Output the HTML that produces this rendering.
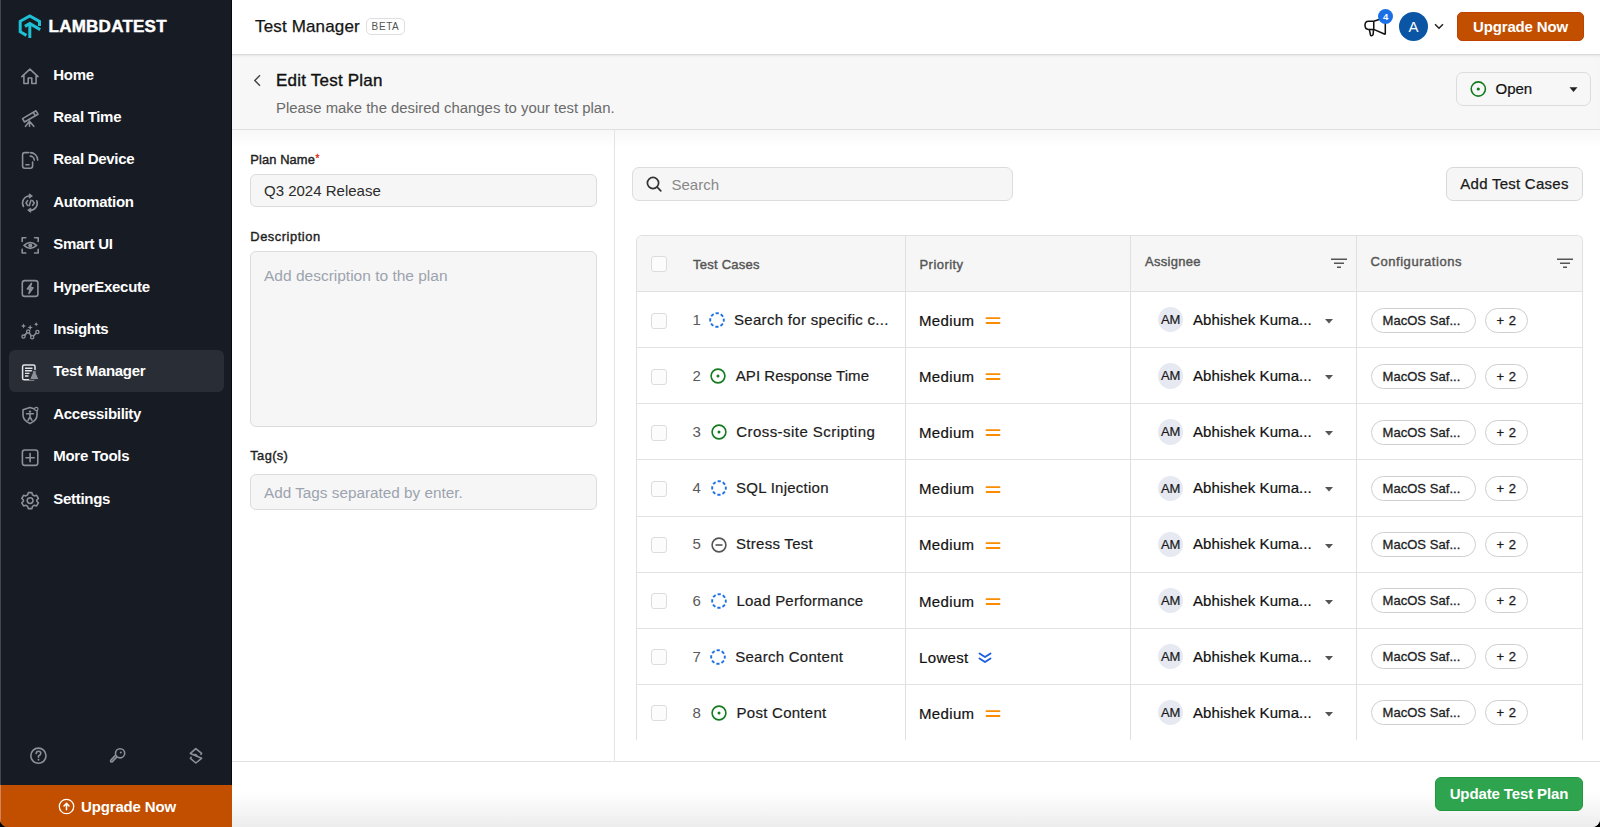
<!DOCTYPE html><html><head><meta charset="utf-8"><style>*{box-sizing:border-box;margin:0;padding:0}
html,body{width:1600px;height:827px;overflow:hidden;background:#000}
body{font-family:"Liberation Sans",sans-serif;position:relative;color:#1a1a1a}
.abs{position:absolute}
#win{position:absolute;left:0;top:0;width:1600px;height:827px;border-radius:0 0 8px 8px;overflow:hidden;background:#fff}
#side{position:absolute;left:0;top:0;width:232px;height:827px;background:#171b24;border-left:1px solid #44474d;border-right:1px solid #07090d}
.logo-t{position:absolute;left:47.5px;top:18px;font-size:17px;font-weight:700;color:#fff;letter-spacing:0.25px;line-height:17px;-webkit-text-stroke:0.45px #fff}
.nav{position:absolute;left:8px;width:215px;height:42px;border-radius:6px}
.nav.act{background:#292d36}
.nav svg{position:absolute;left:11.3px;top:12px;width:20px;height:20px}
.nav span{position:absolute;left:44.3px;top:0;line-height:42px;font-size:15px;font-weight:700;color:#fff;letter-spacing:-0.3px;white-space:nowrap}
#upg{position:absolute;left:-1px;top:785px;width:232px;height:42px;background:#c24e00;border-left:1px solid #d5835c}
#hdr{position:absolute;left:232px;top:0;width:1368px;height:55px;background:#fff;border-bottom:1px solid #d9d9d9}
#ph{box-shadow:inset 0 3px 3px -2px #e4e4e4}
#ph{position:absolute;left:232px;top:55px;width:1368px;height:75px;background:#f7f7f7;border-bottom:1px solid #e0e0e0}
#lp{position:absolute;left:232px;top:130px;width:383px;height:632px;background:linear-gradient(#f8f8f8,#fff 18px);border-right:1px solid #e3e3e3}
#rp{position:absolute;left:615px;top:130px;width:985px;height:632px;background:linear-gradient(#f8f8f8,#fff 18px)}
#ft{position:absolute;left:232px;top:761px;width:1368px;height:66px;border-top:1px solid #e2e2e2;background:linear-gradient(#fff 0,#fff 30px,#ececec 66px)}
.lbl{position:absolute;left:250.3px;font-size:12.9px;font-weight:400;color:#1f1f1f;line-height:14px;white-space:nowrap;-webkit-text-stroke:0.4px #1f1f1f;letter-spacing:0.1px}
.inp{position:absolute;left:250px;width:347px;background:#f6f6f6;border:1px solid #dcdcdc;border-radius:6px}
.ph{color:#9ca3ae}
.txt{position:absolute;white-space:nowrap;line-height:1}
.hd{font-size:13px;font-weight:400;color:#555;-webkit-text-stroke:0.4px #555}
#tbl{position:absolute;left:636px;top:235px;width:947px;height:505px;border:1px solid #e0e0e0;border-bottom:none;border-radius:6px 6px 0 0;overflow:hidden}
.th{position:absolute;left:0;top:0;width:947px;height:56px;background:#f6f6f6;border-bottom:1px solid #e0e0e0}
.vl{position:absolute;top:0;width:1px;height:505px;background:#e0e0e0}
.row{position:absolute;left:0;width:947px;height:56.14px;border-bottom:1px solid #e3e3e3}
.cb{position:absolute;width:16px;height:16px;border:1px solid #dcdcdc;border-radius:3px;background:#fcfcfc}
.pill{position:absolute;height:25px;border:1px solid #cfcfcf;border-radius:13px;background:#fff;font-size:13px;font-weight:400;color:#1e1e1e;line-height:24px;text-align:center;white-space:nowrap;-webkit-text-stroke:0.3px #1e1e1e;letter-spacing:0.05px}

.tk{-webkit-text-stroke:0.2px currentColor}
</style></head><body><div id="win">
<div id="side">
<svg class="abs" style="left:16px;top:13px" width="27" height="27" viewBox="0 0 27 27">
<path d="M9.4 22.4 L3.2 18.7 V8.3 L12.8 2.9 L22.5 8.4 V12.9" fill="none" stroke="#1ec1d4" stroke-width="3"/>
<path d="M7.9 13.4 L12.8 10.6 L23.2 16.6" fill="none" stroke="#1ec1d4" stroke-width="3"/>
<path d="M12.8 11 V25" fill="none" stroke="#1ec1d4" stroke-width="3"/>
</svg><div class="logo-t">LAMBDATEST</div>
<div class="nav" style="top:53.60px"><svg viewBox="0 0 20 20"><path d="M1.8 10.6 L9.9 3.2 L18 10.6 M3.9 9 V17.5 H8.2 V12 H11.8 V17.5 H16.1 V9" fill="none" stroke="#8b9099" stroke-width="1.6" stroke-linecap="round" stroke-linejoin="round"/></svg><span>Home</span></div>
<div class="nav" style="top:96.00px"><svg viewBox="0 0 20 20"><path d="M2.5 10.6 L16 2.8 L18 6.2 L4.5 14 Z M13.3 4.3 L15.3 7.8" fill="none" stroke="#8b9099" stroke-width="1.6" stroke-linecap="round" stroke-linejoin="round"/><path d="M9.5 13.3 L5.5 18.3 M9.5 13.3 V18.3 M9.5 13.3 L13.8 18.3" fill="none" stroke="#8b9099" stroke-width="1.6" stroke-linecap="round" stroke-linejoin="round"/></svg><span>Real Time</span></div>
<div class="nav" style="top:138.40px"><svg viewBox="0 0 20 20"><path d="M8.5 2.6 H4.8 Q2.6 2.6 2.6 4.8 V16 Q2.6 18.2 4.8 18.2 H10.4 Q12.6 18.2 12.6 16 V12" fill="none" stroke="#8b9099" stroke-width="1.6" stroke-linecap="round" stroke-linejoin="round"/><path d="M6 14.8 H9" fill="none" stroke="#8b9099" stroke-width="1.6" stroke-linecap="round" stroke-linejoin="round"/><path d="M10.2 2.6 A7.5 7.5 0 0 1 17.7 10.1 M10.2 6.1 A4 4 0 0 1 14.2 10.1" fill="none" stroke="#8b9099" stroke-width="1.6" stroke-linecap="round" stroke-linejoin="round"/></svg><span>Real Device</span></div>
<div class="nav" style="top:180.80px"><svg viewBox="0 0 20 20"><path d="M3.5 13.5 A7 7 0 0 1 9.8 3 M16.8 7.8 A7 7 0 0 1 10.3 17.2" fill="none" stroke="#8b9099" stroke-width="1.6" stroke-linecap="round" stroke-linejoin="round"/><path d="M9.3 0.9 L12.4 3 L9.3 5.1 Z M10.8 15.1 L7.7 17.2 L10.8 19.3 Z" fill="#8b9099" stroke="#8b9099" stroke-width="1" stroke-linejoin="round"/><path d="M7.6 7.6 L6 10 L7.6 12.4 M12.6 7.6 L14.2 10 L12.6 12.4 M11 7.2 L9.2 12.8" fill="none" stroke="#8b9099" stroke-width="1.6" stroke-linecap="round" stroke-linejoin="round" stroke-width="1.4"/></svg><span>Automation</span></div>
<div class="nav" style="top:223.20px"><svg viewBox="0 0 20 20"><path d="M2.2 6.4 V2.8 H5.8 M14.6 2.8 H18.2 V6.4 M18.2 14.4 V18 H14.6 M5.8 18 H2.2 V14.4" fill="none" stroke="#8b9099" stroke-width="1.6" stroke-linecap="round" stroke-linejoin="round"/><path d="M4 10.4 Q10.2 4.6 16.6 10.4 Q10.2 16.2 4 10.4 Z" fill="none" stroke="#8b9099" stroke-width="1.6" stroke-linecap="round" stroke-linejoin="round"/><circle cx="10.3" cy="10.4" r="2" fill="#8b9099"/></svg><span>Smart UI</span></div>
<div class="nav" style="top:265.60px"><svg viewBox="0 0 20 20"><rect x="2.3" y="2.6" width="15.6" height="15.8" rx="2.5" fill="none" stroke="#8b9099" stroke-width="1.6" stroke-linecap="round" stroke-linejoin="round"/><path d="M11.4 5.4 L7.4 11 H10.3 L9 15.4 L13 9.8 H10.1 Z" fill="none" stroke="#8b9099" stroke-width="1.6" stroke-linecap="round" stroke-linejoin="round" stroke-width="1.3"/></svg><span>HyperExecute</span></div>
<div class="nav" style="top:308.00px"><svg viewBox="0 0 20 20"><path d="M3.5 16.6 L8.2 11.4 L12.2 17.2 L17.4 12" fill="none" stroke="#8b9099" stroke-width="1.6" stroke-linecap="round" stroke-linejoin="round" stroke-width="1.4"/><circle cx="3.5" cy="16.6" r="1.6" fill="#181c25" stroke="#8b9099" stroke-width="1.3"/><circle cx="8.2" cy="11.4" r="1.6" fill="#181c25" stroke="#8b9099" stroke-width="1.3"/><circle cx="12.2" cy="17.2" r="1.6" fill="#181c25" stroke="#8b9099" stroke-width="1.3"/><circle cx="17.4" cy="12" r="1.6" fill="#181c25" stroke="#8b9099" stroke-width="1.3"/><path d="M3.5 3.5 L4.3 5.2 L6 6 L4.3 6.8 L3.5 8.5 L2.7 6.8 L1 6 L2.7 5.2 Z M10.2 4.8 L11 6.7 L12.9 7.5 L11 8.3 L10.2 10.2 L9.4 8.3 L7.5 7.5 L9.4 6.7 Z M16.2 2 L16.9 3.5 L18.4 4.2 L16.9 4.9 L16.2 6.4 L15.5 4.9 L14 4.2 L15.5 3.5 Z" fill="#8b9099"/></svg><span>Insights</span></div>
<div class="nav act" style="top:350.40px"><svg viewBox="0 0 20 20"><rect x="2.6" y="3" width="12.4" height="14.8" rx="1.6" fill="none" stroke="#e3e4e7" stroke-width="1.5"/><path d="M5 6.2 H12.5 M5 8.8 H12.5 M5 11.4 H9.5 M5 14 H8.5" stroke="#e3e4e7" stroke-width="1.4"/><path d="M12.2 8.6 H16.2 V11 L19 17.6 H9.6 L12.4 11 Z" fill="#8b9099" stroke="#292d36" stroke-width="1"/></svg><span>Test Manager</span></div>
<div class="nav" style="top:392.80px"><svg viewBox="0 0 20 20"><path d="M10 2.4 L17 4.8 V10 Q17 15.6 10 18.4 Q3 15.6 3 10 V4.8 Z" fill="none" stroke="#8b9099" stroke-width="1.6" stroke-linecap="round" stroke-linejoin="round"/><circle cx="16.3" cy="4" r="1.7" fill="#181c25" stroke="#8b9099" stroke-width="1.2"/><circle cx="10" cy="6.6" r="1.2" fill="#8b9099"/><path d="M6.6 8.8 H13.4 M10 8.8 V12 L8 15.4 M10 12 L12 15.4" fill="none" stroke="#8b9099" stroke-width="1.6" stroke-linecap="round" stroke-linejoin="round" stroke-width="1.4"/></svg><span>Accessibility</span></div>
<div class="nav" style="top:435.20px"><svg viewBox="0 0 20 20"><rect x="2.4" y="3" width="15.4" height="15.4" rx="2.3" fill="none" stroke="#8b9099" stroke-width="1.6" stroke-linecap="round" stroke-linejoin="round"/><path d="M10.1 6.6 V14.8 M6 10.7 H14.2" fill="none" stroke="#8b9099" stroke-width="1.6" stroke-linecap="round" stroke-linejoin="round"/></svg><span>More Tools</span></div>
<div class="nav" style="top:477.60px"><svg viewBox="0 0 20 20"><path d="M8.3 2.6 H11.9 L12.5 4.8 L14.4 5.9 L16.6 5.3 L18.4 8.4 L16.8 10 V11.2 L18.4 12.8 L16.6 15.9 L14.4 15.3 L12.5 16.4 L11.9 18.6 H8.3 L7.7 16.4 L5.8 15.3 L3.6 15.9 L1.8 12.8 L3.4 11.2 V10 L1.8 8.4 L3.6 5.3 L5.8 5.9 L7.7 4.8 Z" fill="none" stroke="#8b9099" stroke-width="1.6" stroke-linecap="round" stroke-linejoin="round" stroke-width="1.5"/><circle cx="10.1" cy="10.6" r="2.9" fill="none" stroke="#8b9099" stroke-width="1.6" stroke-linecap="round" stroke-linejoin="round"/></svg><span>Settings</span></div>
<svg class="abs" style="left:28.3px;top:746px" width="20" height="20" viewBox="0 0 20 20"><circle cx="9.4" cy="9.7" r="7.6" fill="none" stroke="#8b9099" stroke-width="1.6" stroke-linecap="round" stroke-linejoin="round" stroke-width="1.5"/><path d="M7.2 7.6 Q7.2 5.2 9.5 5.2 Q11.8 5.2 11.8 7.3 Q11.8 8.9 9.5 9.9 V11.2" fill="none" stroke="#8b9099" stroke-width="1.6" stroke-linecap="round" stroke-linejoin="round" stroke-width="1.5"/><circle cx="9.5" cy="13.8" r="0.95" fill="#8b9099"/></svg>
<svg class="abs" style="left:107px;top:746px" width="20" height="20" viewBox="0 0 20 20"><circle cx="12.1" cy="7.3" r="4.6" fill="none" stroke="#8b9099" stroke-width="1.6" stroke-linecap="round" stroke-linejoin="round" stroke-width="1.5"/><circle cx="12.8" cy="6.5" r="1" fill="#8b9099"/><path d="M8.9 10.9 L4.4 15.6 Q3.5 16.4 2.8 15.7 Q2.1 15 2.9 14.1 L7.4 9.4" fill="none" stroke="#8b9099" stroke-width="1.6" stroke-linecap="round" stroke-linejoin="round" stroke-width="1.5"/></svg>
<svg class="abs" style="left:185px;top:746px" width="20" height="20" viewBox="0 0 20 20"><path d="M15 8.4 L15.6 7.4 L9.8 2.6 L4.4 7.4 L15.6 12.3 L9.8 17 L4.4 12.3 L5 11.3" fill="none" stroke="#8b9099" stroke-width="1.6" stroke-linecap="round" stroke-linejoin="round" stroke-width="1.5"/><path d="M8.7 8.6 Q10.3 8.3 10.8 9.8" fill="none" stroke="#8b9099" stroke-width="1.6" stroke-linecap="round" stroke-linejoin="round" stroke-width="1.3"/></svg>
<div id="upg"><svg class="abs" style="left:56.5px;top:13px" width="17" height="17" viewBox="0 0 17 17"><circle cx="8.5" cy="8.5" r="7.2" fill="none" stroke="#fff" stroke-width="1.3"/><path d="M8.5 11.8 V5.4 M6 7.9 L8.5 5.3 L11 7.9" fill="none" stroke="#fff" stroke-width="1.5" stroke-linecap="round" stroke-linejoin="round"/></svg><span class="txt" style="left:80px;top:14px;font-size:15px;font-weight:700;color:#fff;letter-spacing:-0.15px">Upgrade Now</span></div>
</div>
<div id="hdr"></div>
<span class="txt" style="left:255px;top:18.3px;font-size:17px;color:#151515;letter-spacing:0.15px;-webkit-text-stroke:0.25px #151515">Test Manager</span>
<div class="abs" style="left:365.5px;top:17.5px;width:39.5px;height:17.8px;border:1px solid #dedede;border-radius:5px;font-size:10px;color:#555;letter-spacing:0.6px;line-height:16px;text-align:center;padding-left:0.5px">BETA</div>
<svg class="abs" style="left:1362px;top:16px" width="26" height="24" viewBox="0 0 26 24"><path d="M11.75 5.25 H6.5 Q3 5.25 3 9.3 Q3 13.4 6.5 13.4 H11.75 Z M11.75 5.25 L23.3 1.5 V17.3 Q23.3 18.4 22.3 18 L11.75 13.4 M7.3 13.4 L8.5 19 Q8.9 20 10 19.6 Q11 19.2 11.2 18 L11.5 13.4" fill="none" stroke="#111" stroke-width="1.55" stroke-linejoin="round" stroke-linecap="round"/></svg>
<div class="abs" style="left:1377.8px;top:8.5px;width:15.6px;height:15.6px;border-radius:50%;background:#1b6fe4;color:#fff;font-size:9.5px;font-weight:700;text-align:center;line-height:16px">4</div>
<div class="abs" style="left:1399px;top:12px;width:29px;height:29px;border-radius:50%;background:#0b56a4;color:#fff;font-size:15px;text-align:center;line-height:30.5px">A</div>
<svg class="abs" style="left:1433px;top:21px" width="12" height="10" viewBox="0 0 12 10"><path d="M2 3.2 L6 7.2 L10 3.2" fill="none" stroke="#222" stroke-width="1.5"/></svg>
<div class="abs" style="left:1457px;top:12px;width:127px;height:29px;border-radius:5px;background:#c24e00;border:1px solid #bf4200;color:#fff;font-size:15px;font-weight:700;text-align:center;line-height:27px;letter-spacing:-0.15px">Upgrade Now</div>
<div id="ph"></div>
<svg class="abs" style="left:251px;top:73px" width="12" height="15" viewBox="0 0 12 15"><path d="M9 2.2 L3.8 7.5 L9 12.8" fill="none" stroke="#444" stroke-width="1.4"/></svg>
<span class="txt" style="left:276px;top:72.3px;font-size:17px;color:#111;letter-spacing:0.22px;-webkit-text-stroke:0.35px #111">Edit Test Plan</span>
<span class="txt" style="left:276px;top:101.3px;font-size:14.9px;color:#6b6b6b">Please make the desired changes to your test plan.</span>
<div class="abs" style="left:1456px;top:72px;width:135px;height:33.5px;border:1px solid #dcdcdc;border-radius:7px;background:#f7f7f7"></div>
<svg class="abs" style="left:1469px;top:80px" width="18" height="18" viewBox="0 0 18 18"><circle cx="9.3" cy="9" r="7.1" fill="none" stroke="#137a1e" stroke-width="1.6"/><circle cx="9.3" cy="9" r="1.6" fill="#137a1e"/></svg>
<span class="txt" style="left:1495.5px;top:81px;font-size:15px;color:#111;-webkit-text-stroke:0.2px #111">Open</span>
<svg class="abs" style="left:1568px;top:86px" width="11" height="7" viewBox="0 0 11 7"><path d="M1.5 1.3 H9.5 L5.5 6 Z" fill="#222"/></svg>
<div id="lp"></div>
<span class="lbl" style="top:152.5px">Plan Name<span style="color:#d5300f;font-size:10px;position:relative;top:-1.5px;-webkit-text-stroke:0.3px #d5300f;margin-left:0.5px">*</span></span>
<div class="inp" style="top:174px;height:33px"></div>
<span class="txt" style="left:264px;top:183.3px;font-size:15px;color:#2b2b2b">Q3 2024 Release</span>
<span class="lbl" style="top:229.5px;letter-spacing:0.53px">Description</span>
<div class="inp" style="top:251px;height:176px"></div>
<span class="txt ph" style="left:264px;top:267.5px;font-size:15.5px">Add description to the plan</span>
<span class="lbl" style="top:448.5px;letter-spacing:0.36px">Tag(s)</span>
<div class="inp" style="top:474px;height:36px"></div>
<span class="txt ph" style="left:264px;top:485px;font-size:15.3px">Add Tags separated by enter.</span>
<div id="rp"></div>
<div class="abs" style="left:632px;top:167px;width:381px;height:34px;background:#f6f6f6;border:1px solid #dcdcdc;border-radius:7px"></div>
<svg class="abs" style="left:645px;top:175px" width="18" height="18" viewBox="0 0 18 18"><circle cx="8" cy="8" r="5.6" fill="none" stroke="#333" stroke-width="1.7"/><path d="M12.2 12.2 L15.8 15.8" stroke="#333" stroke-width="1.7" stroke-linecap="round"/></svg>
<span class="txt" style="left:671.5px;top:176.5px;font-size:15px;color:#888">Search</span>
<div class="abs" style="left:1446px;top:167px;width:137px;height:34px;background:#f6f6f6;border:1px solid #d8d8d8;border-radius:7px;font-size:15px;color:#1a1a1a;text-align:center;line-height:32px;letter-spacing:0.25px;-webkit-text-stroke:0.25px #1a1a1a">Add Test Cases</div>
<div id="tbl">
<div class="th"></div>
<div class="vl" style="left:268px"></div>
<div class="vl" style="left:493px"></div>
<div class="vl" style="left:719px"></div>
<div class="cb" style="left:13.5px;top:20px"></div>
<span class="txt hd" style="left:56px;top:21.5px;letter-spacing:0.24px">Test Cases</span>
<span class="txt hd" style="left:282.5px;top:21.5px;letter-spacing:0.45px">Priority</span>
<span class="txt hd" style="left:508px;top:18.5px;letter-spacing:0.3px">Assignee</span>
<span class="txt hd" style="left:733.5px;top:18.5px;letter-spacing:0.55px">Configurations</span>
<svg class="abs" style="left:693px;top:17.5px" width="18" height="14" viewBox="0 0 18 14"><path d="M1 5.2 H17 M4 9.2 H14 M7 13.2 H11" stroke="#555" stroke-width="1.6"/></svg>
<svg class="abs" style="left:919px;top:17.5px" width="18" height="14" viewBox="0 0 18 14"><path d="M1 5.2 H17 M4 9.2 H14 M7 13.2 H11" stroke="#555" stroke-width="1.6"/></svg>
<div class="row" style="top:56.00px">
<div class="cb" style="left:13.5px;top:20.5px"></div>
<span class="txt" style="left:55.5px;top:19.50px;font-size:15px;color:#5a5a5a">1</span>
<svg class="abs" style="left:70.5px;top:18.70px" width="18" height="18" viewBox="0 0 18 18"><circle cx="9" cy="9" r="6.8" fill="none" stroke="#1b6fe4" stroke-width="1.9" stroke-dasharray="3.3 2.04" stroke-dashoffset="1.65"/></svg>
<span class="txt tk" style="left:97.0px;top:19.50px;font-size:15px;color:#1c1c1c;letter-spacing:0.3px">Search for specific c...</span>
<span class="txt tk" style="left:282px;top:20.50px;font-size:15px;color:#111;letter-spacing:0.35px">Medium</span>
<svg class="abs" style="left:348px;top:23.80px" width="16" height="10" viewBox="0 0 16 10"><path d="M1.5 2.2 H14.5 M1.5 7 H14.5" stroke="#fb8c00" stroke-width="1.8" stroke-linecap="round"/></svg>
<div class="abs" style="left:521px;top:15.2px;width:25.3px;height:25.3px;border-radius:50%;background:#e6e9f1;font-size:13px;color:#1a1a1a;text-align:center;line-height:26px;-webkit-text-stroke:0.2px #1a1a1a">AM</div>
<span class="txt tk" style="left:556px;top:19.50px;font-size:15px;color:#111;letter-spacing:0.08px">Abhishek Kuma...</span>
<svg class="abs" style="left:687px;top:26px" width="10" height="6" viewBox="0 0 10 6"><path d="M1 1 H9 L5 5.5 Z" fill="#555"/></svg>
<div class="pill" style="left:733.5px;top:15.5px;width:105px;text-align:left;padding-left:11px">MacOS Saf...</div>
<div class="pill" style="left:847.8px;top:15.5px;width:43px;word-spacing:1px">+ 2</div>
</div>
<div class="row" style="top:112.14px">
<div class="cb" style="left:13.5px;top:20.5px"></div>
<span class="txt" style="left:55.5px;top:19.60px;font-size:15px;color:#5a5a5a">2</span>
<svg class="abs" style="left:72.3px;top:18.80px" width="18" height="18" viewBox="0 0 18 18"><circle cx="9" cy="9" r="6.9" fill="none" stroke="#137a1e" stroke-width="1.6"/><circle cx="9" cy="9" r="1.5" fill="#137a1e"/></svg>
<span class="txt tk" style="left:98.8px;top:19.60px;font-size:15px;color:#1c1c1c;letter-spacing:0.04px">API Response Time</span>
<span class="txt tk" style="left:282px;top:20.60px;font-size:15px;color:#111;letter-spacing:0.35px">Medium</span>
<svg class="abs" style="left:348px;top:23.90px" width="16" height="10" viewBox="0 0 16 10"><path d="M1.5 2.2 H14.5 M1.5 7 H14.5" stroke="#fb8c00" stroke-width="1.8" stroke-linecap="round"/></svg>
<div class="abs" style="left:521px;top:15.2px;width:25.3px;height:25.3px;border-radius:50%;background:#e6e9f1;font-size:13px;color:#1a1a1a;text-align:center;line-height:26px;-webkit-text-stroke:0.2px #1a1a1a">AM</div>
<span class="txt tk" style="left:556px;top:19.60px;font-size:15px;color:#111;letter-spacing:0.08px">Abhishek Kuma...</span>
<svg class="abs" style="left:687px;top:26px" width="10" height="6" viewBox="0 0 10 6"><path d="M1 1 H9 L5 5.5 Z" fill="#555"/></svg>
<div class="pill" style="left:733.5px;top:15.5px;width:105px;text-align:left;padding-left:11px">MacOS Saf...</div>
<div class="pill" style="left:847.8px;top:15.5px;width:43px;word-spacing:1px">+ 2</div>
</div>
<div class="row" style="top:168.28px">
<div class="cb" style="left:13.5px;top:20.5px"></div>
<span class="txt" style="left:55.5px;top:19.70px;font-size:15px;color:#5a5a5a">3</span>
<svg class="abs" style="left:72.7px;top:18.90px" width="18" height="18" viewBox="0 0 18 18"><circle cx="9" cy="9" r="6.9" fill="none" stroke="#137a1e" stroke-width="1.6"/><circle cx="9" cy="9" r="1.5" fill="#137a1e"/></svg>
<span class="txt tk" style="left:99.2px;top:19.70px;font-size:15px;color:#1c1c1c;letter-spacing:0.45px">Cross-site Scripting</span>
<span class="txt tk" style="left:282px;top:20.70px;font-size:15px;color:#111;letter-spacing:0.35px">Medium</span>
<svg class="abs" style="left:348px;top:24.00px" width="16" height="10" viewBox="0 0 16 10"><path d="M1.5 2.2 H14.5 M1.5 7 H14.5" stroke="#fb8c00" stroke-width="1.8" stroke-linecap="round"/></svg>
<div class="abs" style="left:521px;top:15.2px;width:25.3px;height:25.3px;border-radius:50%;background:#e6e9f1;font-size:13px;color:#1a1a1a;text-align:center;line-height:26px;-webkit-text-stroke:0.2px #1a1a1a">AM</div>
<span class="txt tk" style="left:556px;top:19.70px;font-size:15px;color:#111;letter-spacing:0.08px">Abhishek Kuma...</span>
<svg class="abs" style="left:687px;top:26px" width="10" height="6" viewBox="0 0 10 6"><path d="M1 1 H9 L5 5.5 Z" fill="#555"/></svg>
<div class="pill" style="left:733.5px;top:15.5px;width:105px;text-align:left;padding-left:11px">MacOS Saf...</div>
<div class="pill" style="left:847.8px;top:15.5px;width:43px;word-spacing:1px">+ 2</div>
</div>
<div class="row" style="top:224.42px">
<div class="cb" style="left:13.5px;top:20.5px"></div>
<span class="txt" style="left:55.5px;top:19.80px;font-size:15px;color:#5a5a5a">4</span>
<svg class="abs" style="left:72.5px;top:19.00px" width="18" height="18" viewBox="0 0 18 18"><circle cx="9" cy="9" r="6.8" fill="none" stroke="#1b6fe4" stroke-width="1.9" stroke-dasharray="3.3 2.04" stroke-dashoffset="1.65"/></svg>
<span class="txt tk" style="left:99.0px;top:19.80px;font-size:15px;color:#1c1c1c;letter-spacing:0.25px">SQL Injection</span>
<span class="txt tk" style="left:282px;top:20.80px;font-size:15px;color:#111;letter-spacing:0.35px">Medium</span>
<svg class="abs" style="left:348px;top:24.10px" width="16" height="10" viewBox="0 0 16 10"><path d="M1.5 2.2 H14.5 M1.5 7 H14.5" stroke="#fb8c00" stroke-width="1.8" stroke-linecap="round"/></svg>
<div class="abs" style="left:521px;top:15.2px;width:25.3px;height:25.3px;border-radius:50%;background:#e6e9f1;font-size:13px;color:#1a1a1a;text-align:center;line-height:26px;-webkit-text-stroke:0.2px #1a1a1a">AM</div>
<span class="txt tk" style="left:556px;top:19.80px;font-size:15px;color:#111;letter-spacing:0.08px">Abhishek Kuma...</span>
<svg class="abs" style="left:687px;top:26px" width="10" height="6" viewBox="0 0 10 6"><path d="M1 1 H9 L5 5.5 Z" fill="#555"/></svg>
<div class="pill" style="left:733.5px;top:15.5px;width:105px;text-align:left;padding-left:11px">MacOS Saf...</div>
<div class="pill" style="left:847.8px;top:15.5px;width:43px;word-spacing:1px">+ 2</div>
</div>
<div class="row" style="top:280.56px">
<div class="cb" style="left:13.5px;top:20.5px"></div>
<span class="txt" style="left:55.5px;top:19.90px;font-size:15px;color:#5a5a5a">5</span>
<svg class="abs" style="left:72.5px;top:19.10px" width="18" height="18" viewBox="0 0 18 18"><circle cx="9" cy="9" r="6.9" fill="none" stroke="#555" stroke-width="1.6"/><path d="M5.5 9 H12.5" stroke="#555" stroke-width="1.6"/></svg>
<span class="txt tk" style="left:99.0px;top:19.90px;font-size:15px;color:#1c1c1c;letter-spacing:0.28px">Stress Test</span>
<span class="txt tk" style="left:282px;top:20.90px;font-size:15px;color:#111;letter-spacing:0.35px">Medium</span>
<svg class="abs" style="left:348px;top:24.20px" width="16" height="10" viewBox="0 0 16 10"><path d="M1.5 2.2 H14.5 M1.5 7 H14.5" stroke="#fb8c00" stroke-width="1.8" stroke-linecap="round"/></svg>
<div class="abs" style="left:521px;top:15.2px;width:25.3px;height:25.3px;border-radius:50%;background:#e6e9f1;font-size:13px;color:#1a1a1a;text-align:center;line-height:26px;-webkit-text-stroke:0.2px #1a1a1a">AM</div>
<span class="txt tk" style="left:556px;top:19.90px;font-size:15px;color:#111;letter-spacing:0.08px">Abhishek Kuma...</span>
<svg class="abs" style="left:687px;top:26px" width="10" height="6" viewBox="0 0 10 6"><path d="M1 1 H9 L5 5.5 Z" fill="#555"/></svg>
<div class="pill" style="left:733.5px;top:15.5px;width:105px;text-align:left;padding-left:11px">MacOS Saf...</div>
<div class="pill" style="left:847.8px;top:15.5px;width:43px;word-spacing:1px">+ 2</div>
</div>
<div class="row" style="top:336.70px">
<div class="cb" style="left:13.5px;top:20.5px"></div>
<span class="txt" style="left:55.5px;top:20.00px;font-size:15px;color:#5a5a5a">6</span>
<svg class="abs" style="left:73.0px;top:19.20px" width="18" height="18" viewBox="0 0 18 18"><circle cx="9" cy="9" r="6.8" fill="none" stroke="#1b6fe4" stroke-width="1.9" stroke-dasharray="3.3 2.04" stroke-dashoffset="1.65"/></svg>
<span class="txt tk" style="left:99.5px;top:20.00px;font-size:15px;color:#1c1c1c;letter-spacing:0.22px">Load Performance</span>
<span class="txt tk" style="left:282px;top:21.00px;font-size:15px;color:#111;letter-spacing:0.35px">Medium</span>
<svg class="abs" style="left:348px;top:24.30px" width="16" height="10" viewBox="0 0 16 10"><path d="M1.5 2.2 H14.5 M1.5 7 H14.5" stroke="#fb8c00" stroke-width="1.8" stroke-linecap="round"/></svg>
<div class="abs" style="left:521px;top:15.2px;width:25.3px;height:25.3px;border-radius:50%;background:#e6e9f1;font-size:13px;color:#1a1a1a;text-align:center;line-height:26px;-webkit-text-stroke:0.2px #1a1a1a">AM</div>
<span class="txt tk" style="left:556px;top:20.00px;font-size:15px;color:#111;letter-spacing:0.08px">Abhishek Kuma...</span>
<svg class="abs" style="left:687px;top:26px" width="10" height="6" viewBox="0 0 10 6"><path d="M1 1 H9 L5 5.5 Z" fill="#555"/></svg>
<div class="pill" style="left:733.5px;top:15.5px;width:105px;text-align:left;padding-left:11px">MacOS Saf...</div>
<div class="pill" style="left:847.8px;top:15.5px;width:43px;word-spacing:1px">+ 2</div>
</div>
<div class="row" style="top:392.84px">
<div class="cb" style="left:13.5px;top:20.5px"></div>
<span class="txt" style="left:55.5px;top:20.10px;font-size:15px;color:#5a5a5a">7</span>
<svg class="abs" style="left:71.7px;top:19.30px" width="18" height="18" viewBox="0 0 18 18"><circle cx="9" cy="9" r="6.8" fill="none" stroke="#1b6fe4" stroke-width="1.9" stroke-dasharray="3.3 2.04" stroke-dashoffset="1.65"/></svg>
<span class="txt tk" style="left:98.2px;top:20.10px;font-size:15px;color:#1c1c1c;letter-spacing:0.27px">Search Content</span>
<span class="txt tk" style="left:282px;top:21.10px;font-size:15px;color:#111;letter-spacing:0.35px">Lowest</span>
<svg class="abs" style="left:341px;top:22.5px" width="14" height="14" viewBox="0 0 14 14"><path d="M1.5 2.5 L7 6 L12.5 2.5 M1.5 7.5 L7 11 L12.5 7.5" fill="none" stroke="#1b5fe0" stroke-width="1.9" stroke-linecap="round" stroke-linejoin="round"/></svg>
<div class="abs" style="left:521px;top:15.2px;width:25.3px;height:25.3px;border-radius:50%;background:#e6e9f1;font-size:13px;color:#1a1a1a;text-align:center;line-height:26px;-webkit-text-stroke:0.2px #1a1a1a">AM</div>
<span class="txt tk" style="left:556px;top:20.10px;font-size:15px;color:#111;letter-spacing:0.08px">Abhishek Kuma...</span>
<svg class="abs" style="left:687px;top:26px" width="10" height="6" viewBox="0 0 10 6"><path d="M1 1 H9 L5 5.5 Z" fill="#555"/></svg>
<div class="pill" style="left:733.5px;top:15.5px;width:105px;text-align:left;padding-left:11px">MacOS Saf...</div>
<div class="pill" style="left:847.8px;top:15.5px;width:43px;word-spacing:1px">+ 2</div>
</div>
<div class="row" style="top:448.98px">
<div class="cb" style="left:13.5px;top:20.5px"></div>
<span class="txt" style="left:55.5px;top:20.20px;font-size:15px;color:#5a5a5a">8</span>
<svg class="abs" style="left:73.0px;top:19.40px" width="18" height="18" viewBox="0 0 18 18"><circle cx="9" cy="9" r="6.9" fill="none" stroke="#137a1e" stroke-width="1.6"/><circle cx="9" cy="9" r="1.5" fill="#137a1e"/></svg>
<span class="txt tk" style="left:99.5px;top:20.20px;font-size:15px;color:#1c1c1c;letter-spacing:0.27px">Post Content</span>
<span class="txt tk" style="left:282px;top:21.20px;font-size:15px;color:#111;letter-spacing:0.35px">Medium</span>
<svg class="abs" style="left:348px;top:24.50px" width="16" height="10" viewBox="0 0 16 10"><path d="M1.5 2.2 H14.5 M1.5 7 H14.5" stroke="#fb8c00" stroke-width="1.8" stroke-linecap="round"/></svg>
<div class="abs" style="left:521px;top:15.2px;width:25.3px;height:25.3px;border-radius:50%;background:#e6e9f1;font-size:13px;color:#1a1a1a;text-align:center;line-height:26px;-webkit-text-stroke:0.2px #1a1a1a">AM</div>
<span class="txt tk" style="left:556px;top:20.20px;font-size:15px;color:#111;letter-spacing:0.08px">Abhishek Kuma...</span>
<svg class="abs" style="left:687px;top:26px" width="10" height="6" viewBox="0 0 10 6"><path d="M1 1 H9 L5 5.5 Z" fill="#555"/></svg>
<div class="pill" style="left:733.5px;top:15.5px;width:105px;text-align:left;padding-left:11px">MacOS Saf...</div>
<div class="pill" style="left:847.8px;top:15.5px;width:43px;word-spacing:1px">+ 2</div>
</div>
</div>
<div id="ft"></div>
<div class="abs" style="left:1435px;top:777px;width:148px;height:33.5px;border-radius:6px;background:#2ea44f;border:1px solid #23963f;color:#fff;font-size:15px;font-weight:700;text-align:center;line-height:31.5px;letter-spacing:-0.12px">Update Test Plan</div>
</div></body></html>
